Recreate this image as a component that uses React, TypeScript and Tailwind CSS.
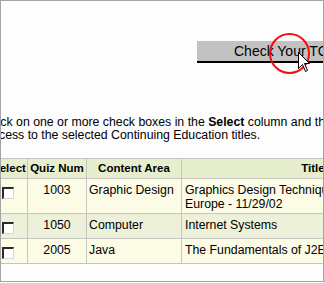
import React from "react"

// Continuing education selection page: submit button, instructions and the quiz table
// (the page is shown scrolled, so its left and right edges are cut off by the frame).

type Course = {
    quiz: string
    area: string
    title: string[]
    tint: string
    height: string
}

const courses: Course[] = [
    { quiz: "1003", area: "Graphic Design", title: ["Graphics Design Techniques in Eastern", "Europe - 11/29/02"], tint: "bg-[#fbfbe6]", height: "h-[35px]" },
    { quiz: "1050", area: "Computer", title: ["Internet Systems"], tint: "bg-[#edf1da]", height: "h-[25px]" },
    { quiz: "2005", area: "Java", title: ["The Fundamentals of J2EE Architecture"], tint: "bg-[#fbfbe6]", height: "h-[25px]" },
]

function Checkbox() {
    return (
        <span className="block w-[12px] h-[12px] bg-white border-t-2 border-l-2 border-r border-b border-t-[#2a2a2a] border-l-[#2a2a2a] border-r-[#d6d6d6] border-b-[#d6d6d6]" />
    )
}

function Cursor() {
    return (
        <svg width="13" height="21" viewBox="0 0 13 21" className="absolute left-[297px] top-[51px]">
            <path d="M0.5 0.5 L0.5 16.5 L4.5 12.5 L7.5 19.5 L9.5 18.5 L6.5 11.5 L11.5 11.5 Z" fill="#fff" stroke="#000" strokeWidth="1" />
        </svg>
    )
}

export default function App() {
    const cell = "border-r border-b border-[#c6c6c0]"
    return (
        <div className="relative w-[324px] h-[282px] overflow-hidden border border-[#a4a4a4] bg-[#fdfdfd] text-black"
             style={{ fontFamily: '"Liberation Sans", Arial, sans-serif' }}>
            <div className="w-[700px] flex flex-col">
                <div className="pt-[40px] pl-[196px]">
                    <div className="h-[22px] w-[300px] bg-[#c2c2c2] border-b-2 border-black pl-[37px] text-[14px] leading-[20px] whitespace-nowrap">
                        Check Your TCE Transcript
                    </div>
                </div>

                <div className="mt-[53px] -ml-[15px] text-[12.3px] leading-[13px] whitespace-nowrap">
                    <p>Click on one or more check boxes in the <b>Select</b> column and then click the button above to gain</p>
                    <p>access to the selected Continuing Education titles.</p>
                </div>

                <div className="mt-[16px] -ml-[10px] grid grid-cols-[37px_59px_95px_263px] border-t border-[#c6c6c0]">
                    {["Select", "Quiz Num", "Content Area", "Title"].map(h => (
                        <div key={h} className={`${cell} h-[20px] bg-[#e7eecd] flex items-center justify-center text-[11.5px] font-bold whitespace-nowrap`}>
                            {h}
                        </div>
                    ))}
                    {courses.map(c => (
                        <React.Fragment key={c.quiz}>
                            <div className={`${cell} ${c.tint} ${c.height} pl-[11px] pt-[8px]`}>
                                <Checkbox />
                            </div>
                            <div className={`${cell} ${c.tint} ${c.height} pt-[4px] text-center text-[12.3px] leading-[14px]`}>
                                {c.quiz}
                            </div>
                            <div className={`${cell} ${c.tint} ${c.height} pt-[4px] pl-[2px] text-[12.3px] leading-[14px] whitespace-nowrap`}>
                                {c.area}
                            </div>
                            <div className={`${cell} ${c.tint} ${c.height} pt-[4px] pl-[3px] text-[12.3px] leading-[14px] whitespace-nowrap`}>
                                {c.title.map(t => <div key={t}>{t}</div>)}
                            </div>
                        </React.Fragment>
                    ))}
                </div>
            </div>

            <div className="absolute left-[268px] top-[32px] w-[41px] h-[41px] rounded-full border-2 border-[#f01010]" />
            <Cursor />
        </div>
    )
}
